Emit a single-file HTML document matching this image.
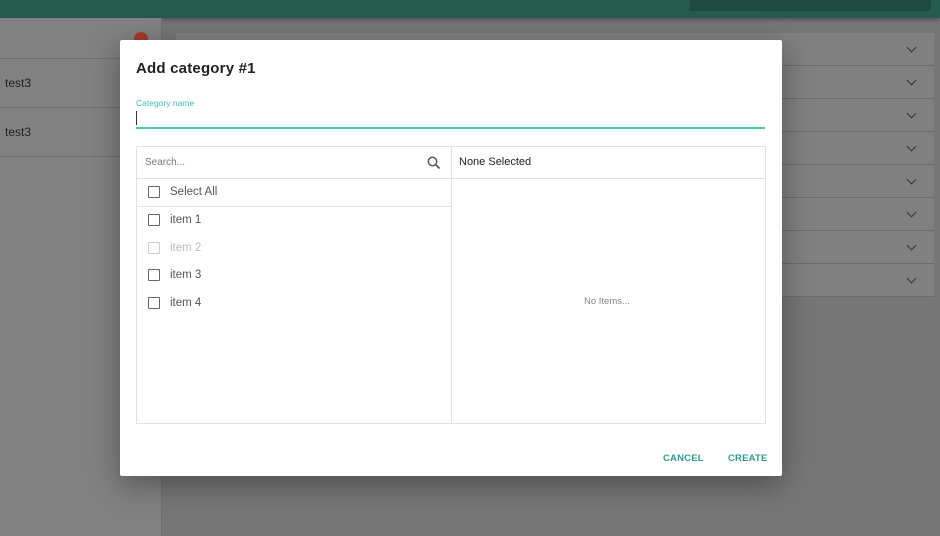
<!DOCTYPE html>
<html><head><style>
body{margin:0;width:940px;height:536px;overflow:hidden;font-family:"Liberation Sans",sans-serif;background:#767676;position:relative}
.hdr{position:absolute;left:0;top:0;width:940px;height:18px;background:#245a50;box-shadow:0 2px 4px rgba(0,0,0,.3)}
.hsearch{position:absolute;left:690px;top:0;width:241px;height:11px;background:#1f4a43}
.side{position:absolute;left:0;top:18px;width:161px;height:518px;background:#818181;border-right:1px solid #6f6f6f}
.srow{position:absolute;left:0;width:161px;border-bottom:1px solid #6f6f6f;font-size:12px;color:#222;box-sizing:border-box;padding-left:5px}
.plus{position:absolute;left:134px;top:32px;width:14px;height:14px;border-radius:50%;background:#a33a2a}
.card{position:absolute;left:176px;width:758px;height:33px;background:#808080;border-bottom:1px solid #6a6a6a;box-sizing:border-box}
.chev{position:absolute;left:908px;width:6px;height:6px;border-right:1.5px solid #333;border-bottom:1.5px solid #333;transform:rotate(45deg)}
.dlg{position:absolute;left:120px;top:40px;width:662px;height:436px;background:#fff;border-radius:2px;box-shadow:0 8px 30px rgba(0,0,0,.35)}
.t{position:absolute;left:16px;top:20px;font-size:15px;font-weight:bold;color:#222;letter-spacing:.2px}
.lbl{position:absolute;left:16px;top:58px;font-size:8.5px;color:#3fc2a9}
.cur{position:absolute;left:16px;top:71px;width:1px;height:14px;background:#333}
.line{position:absolute;left:16px;top:87px;width:629px;height:2px;background:#45c9b0}
.box{position:absolute;left:16px;top:106px;width:628px;height:276px;border:1px solid #e2e2e2}
.div{position:absolute;left:314px;top:0;width:1px;height:276px;background:#e2e2e2}
.hl{position:absolute;top:31px;height:1px;background:#e2e2e2}
.cb{position:absolute;left:11px;width:10px;height:10px;border:1.5px solid #666;border-radius:1px}
.it{position:absolute;left:33px;font-size:11.5px;color:#555}
.btn{position:absolute;top:413px;font-size:9.5px;font-weight:bold;color:#2a9d8a;letter-spacing:.2px}
</style></head><body>
<div class="hdr"><div class="hsearch"></div></div>
<div class="side">
<div class="srow" style="top:0;height:41px"></div>
<div class="srow" style="top:41px;height:49px;line-height:48px">test3</div>
<div class="srow" style="top:90px;height:49px;line-height:48px">test3</div>
</div>
<div class="plus"></div>
<div class="card" style="top:33px"></div><div class="card" style="top:66px"></div><div class="card" style="top:99px"></div><div class="card" style="top:132px"></div><div class="card" style="top:165px"></div><div class="card" style="top:198px"></div><div class="card" style="top:231px"></div><div class="card" style="top:264px"></div>
<div class="chev" style="top:44px"></div><div class="chev" style="top:77px"></div><div class="chev" style="top:110px"></div><div class="chev" style="top:143px"></div><div class="chev" style="top:176px"></div><div class="chev" style="top:209px"></div><div class="chev" style="top:242px"></div><div class="chev" style="top:275px"></div>
<div class="dlg">
<div class="t">Add category #1</div>
<div class="lbl">Category name</div>
<div class="cur"></div>
<div class="line"></div>
<div class="box">
<div style="position:absolute;left:8px;top:10px;font-size:10px;color:#777">Search...</div>
<svg style="position:absolute;left:290px;top:9px" width="14" height="14" viewBox="0 0 14 14"><circle cx="5.5" cy="5.5" r="4.2" fill="none" stroke="#555" stroke-width="1.5"/><line x1="8.5" y1="8.5" x2="12.5" y2="12.5" stroke="#555" stroke-width="1.7"/></svg>
<div style="position:absolute;left:322px;top:9px;font-size:11px;color:#222">None Selected</div>
<div class="hl" style="left:0;width:628px"></div>
<div class="hl" style="left:0;width:314px;top:59px"></div>
<div class="cb" style="top:39px"></div><div class="it" style="top:39px">Select All</div>
<div class="cb" style="top:67px"></div><div class="it" style="top:67px">item 1</div>
<div class="cb" style="top:95px;border-color:#ccc"></div><div class="it" style="top:95px;color:#bbb">item 2</div>
<div class="cb" style="top:122px"></div><div class="it" style="top:122px">item 3</div>
<div class="cb" style="top:150px"></div><div class="it" style="top:150px">item 4</div>
<div style="position:absolute;left:447px;top:149px;font-size:9.5px;color:#888">No Items...</div>
<div class="div"></div>
</div>
<div class="btn" style="left:543px">CANCEL</div>
<div class="btn" style="left:608px">CREATE</div>
</div>
</body></html>
